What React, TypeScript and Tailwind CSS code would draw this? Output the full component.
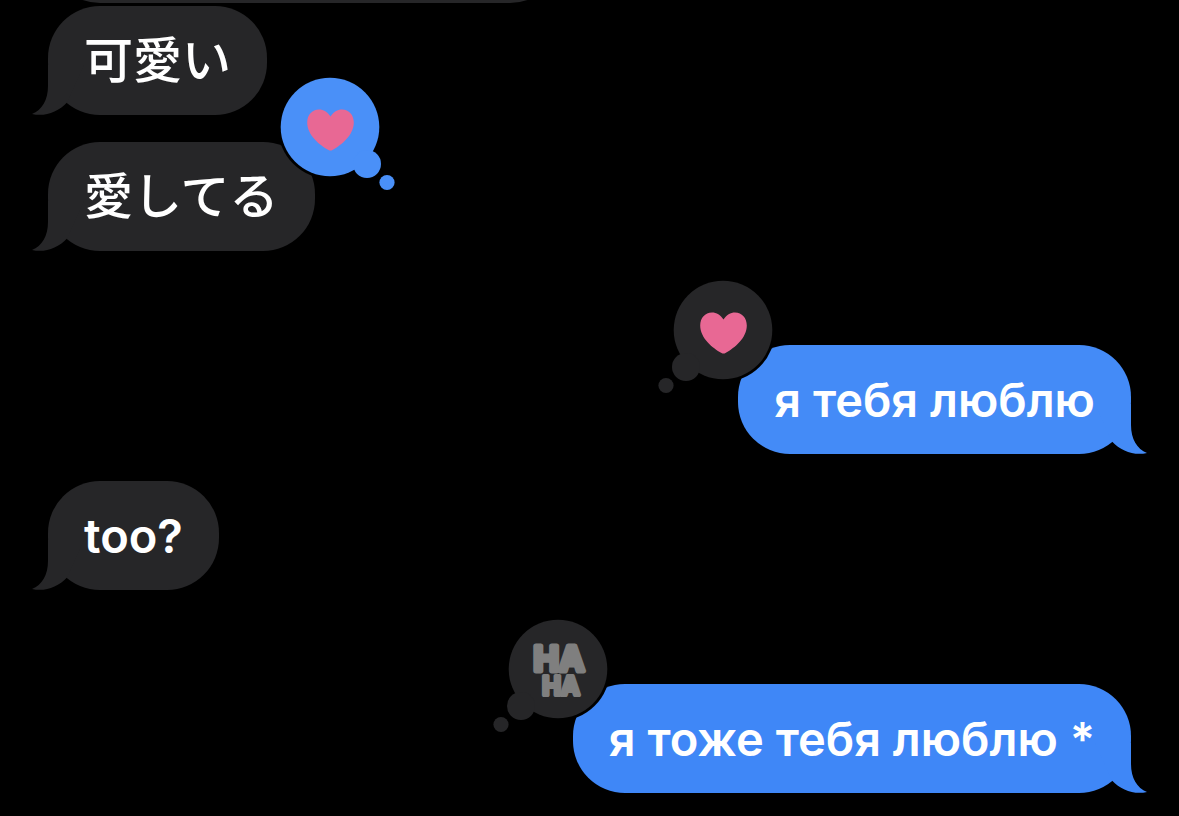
import React from "react";
import clsx from "clsx";

type Reaction = "heart" | "haha";

type Message = {
    id: number;
    text: string;
    lang: string;
    sent: boolean;
    color: string;
    spacing: string;
    reaction?: Reaction;
};

const messages: Message[] = [
    { id: 1, text: "可愛い", lang: "ja", sent: false, color: "text-[#262628]", spacing: "mt-[3px]" },
    { id: 2, text: "愛してる", lang: "ja", sent: false, color: "text-[#262628]", spacing: "mt-[27px]", reaction: "heart" },
    { id: 3, text: "я тебя люблю", lang: "ru", sent: true, color: "text-[#448bf7]", spacing: "mt-[94px]", reaction: "heart" },
    { id: 4, text: "too?", lang: "en", sent: false, color: "text-[#262628]", spacing: "mt-[27px]" },
    { id: 5, text: "я тоже тебя люблю *", lang: "ru", sent: true, color: "text-[#3f87f7]", spacing: "mt-[94px]", reaction: "haha" },
];

// little curl at the bottom corner, takes the bubble color
const Tail: React.FC<{ sent: boolean }> = ({ sent }) => (
    <svg
        className={clsx("absolute bottom-0 h-[50px] w-[52px]", sent ? "-right-4 -scale-x-100" : "-left-4")}
        viewBox="0 0 52 50"
        fill="currentColor"
        aria-hidden="true"
    >
        <path d="M16 0V21C16 35 10 45 0 49C13 52 26 47 35 37.500L52 0Z" />
    </svg>
);

// thought bubble that sits on the inner top corner of a message
const Tapback: React.FC<{ type: Reaction; sent: boolean }> = ({ type, sent }) => (
    <svg
        className={clsx(
            "absolute -top-[67px] h-[118px] w-[118px]",
            sent ? "-left-[81px] text-[#262628]" : "-right-[81px] text-[#4a90f8]"
        )}
        viewBox="0 0 118 118"
        fill="currentColor"
        role="img"
        aria-label={type}
    >
        <g transform={sent ? "translate(118 0) scale(-1 1)" : undefined}>
            <circle cx="52" cy="52" r="52" fill="#000" />
            <circle cx="52" cy="52" r="49.3" />
            <circle cx="89" cy="89" r="14" />
            <circle cx="109" cy="107.500" r="7.600" />
        </g>
        {type === "heart" && (
            <path
                transform={sent ? "translate(66.500 55)" : "translate(52.500 55)"}
                fill="#e86894"
                d="M0-13.500C-3-18-7-20.500-11.500-20.500C-18.500-20.500-23.300-15-23.300-7.500C-23.300 5-11 15-2 20Q0 21 2 20C11 15 23.300 5 23.300-7.500C23.300-15 18.500-20.500 11.500-20.500C7-20.500 3-18 0-13.500Z"
            />
        )}
        {type === "haha" && (
            <g
                className="font-['Inter',sans-serif] font-bold"
                fill="#7f7f7f"
                stroke="#7f7f7f"
                strokeWidth="5"
                strokeLinejoin="round"
                textAnchor="middle"
            >
                <text x="67" y="54" fontSize="34">HA</text>
                <text x="69" y="78" fontSize="25" strokeWidth="4">HA</text>
            </g>
        )}
    </svg>
);

const App: React.FC = () => {
    return (
        <main className="min-h-screen overflow-hidden bg-black px-12 pb-6 font-['Inter','Noto_Sans_CJK_JP',sans-serif]">
            {/* previous message, scrolled out of view */}
            <div className="-mt-[106px] h-[109px] w-[514px] rounded-[52px] bg-[#262628]" />

            <ul className="flex flex-col">
                {messages.map((message) => (
                    <li
                        key={message.id}
                        className={clsx("flex", message.spacing, message.sent ? "justify-end" : "justify-start")}
                    >
                        <div className={clsx("relative h-[109px] rounded-[52px] bg-current px-9", message.color)}>
                            <Tail sent={message.sent} />
                            <p
                                lang={message.lang}
                                className={clsx(
                                    "relative whitespace-nowrap leading-[109px] text-white",
                                    message.lang === "ja" ? "text-[49px] font-medium" : "text-[47px] font-semibold"
                                )}
                            >
                                {message.text}
                            </p>
                            {message.reaction && <Tapback type={message.reaction} sent={message.sent} />}
                        </div>
                    </li>
                ))}
            </ul>
        </main>
    );
};

export default App;
